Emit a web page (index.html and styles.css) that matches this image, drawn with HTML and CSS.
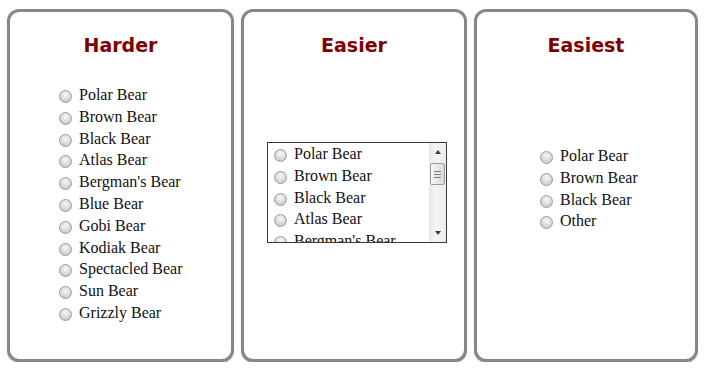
FILE: index.html
```html
<!DOCTYPE html>
<html>
<head>
<meta charset="utf-8">
<title>Bears</title>
<link rel="stylesheet" href="styles.css">
</head>
<body>
<div class="boards">
  <section class="panel panel--harder">
    <h2 class="title">Harder</h2>
    <ul class="bears bears--harder">
      <li><label><input type="radio" name="harder">Polar Bear</label></li>
      <li><label><input type="radio" name="harder">Brown Bear</label></li>
      <li><label><input type="radio" name="harder">Black Bear</label></li>
      <li><label><input type="radio" name="harder">Atlas Bear</label></li>
      <li><label><input type="radio" name="harder">Bergman's Bear</label></li>
      <li><label><input type="radio" name="harder">Blue Bear</label></li>
      <li><label><input type="radio" name="harder">Gobi Bear</label></li>
      <li><label><input type="radio" name="harder">Kodiak Bear</label></li>
      <li><label><input type="radio" name="harder">Spectacled Bear</label></li>
      <li><label><input type="radio" name="harder">Sun Bear</label></li>
      <li><label><input type="radio" name="harder">Grizzly Bear</label></li>
    </ul>
  </section>
  <section class="panel panel--easier">
    <h2 class="title">Easier</h2>
    <div class="listbox">
      <ul class="bears bears--box">
        <li><label><input type="radio" name="easier">Polar Bear</label></li>
        <li><label><input type="radio" name="easier">Brown Bear</label></li>
        <li><label><input type="radio" name="easier">Black Bear</label></li>
        <li><label><input type="radio" name="easier">Atlas Bear</label></li>
        <li><label><input type="radio" name="easier">Bergman's Bear</label></li>
      </ul>
      <div class="scrollbar">
        <span class="arrow arrow--up"></span>
        <span class="thumb"><i></i><i></i><i></i></span>
        <span class="arrow arrow--down"></span>
      </div>
    </div>
  </section>
  <section class="panel panel--easiest">
    <h2 class="title">Easiest</h2>
    <ul class="bears bears--easiest">
      <li><label><input type="radio" name="easiest">Polar Bear</label></li>
      <li><label><input type="radio" name="easiest">Brown Bear</label></li>
      <li><label><input type="radio" name="easiest">Black Bear</label></li>
      <li><label><input type="radio" name="easiest">Other</label></li>
    </ul>
  </section>
</div>
</body>
</html>
```
FILE: styles.css
```css
html, body {
  margin: 0;
  background: #ffffff;
}
body {
  font-family: "Liberation Serif", "Times New Roman", serif;
  color: #111111;
}
.boards {
  display: flex;
  gap: 7px;
  padding: 9px 0 0 7px;
}
.panel {
  box-sizing: border-box;
  flex: none;
  height: 353px;
  border: 3px solid #878787;
  border-radius: 12px;
  box-shadow: 0 1px 1px rgba(0, 0, 0, 0.25);
  background: #ffffff;
}
.panel--harder { width: 227px; }
.panel--easier { width: 226px; }
.panel--easiest { width: 224px; }

.title {
  margin: 22px 0 0;
  font-family: "DejaVu Sans", Verdana, sans-serif;
  font-weight: bold;
  font-size: 19px;
  line-height: 22px;
  color: #800000;
  text-align: center;
}

.bears {
  list-style: none;
  margin: 0;
  padding: 0;
  font-size: 16px;
  line-height: 21.8px;
}
.bears label {
  display: block;
  white-space: nowrap;
}
.bears input {
  -webkit-appearance: none;
  appearance: none;
  box-sizing: border-box;
  width: 13px;
  height: 13px;
  margin: 0 7px 0 0;
  vertical-align: -3px;
  border-radius: 50%;
  border: 1px solid #9c9c9c;
  background: radial-gradient(circle at 50% 35%, #f8f8f8 0%, #dedede 45%, #bdbdbd 100%);
}

.bears--harder {
  margin-top: 28px;
  padding-left: 49px;
}
.bears--easiest {
  margin-top: 89px;
  padding-left: 63px;
}

.listbox {
  box-sizing: border-box;
  display: flex;
  width: 180px;
  height: 101px;
  margin: 86px 0 0 23px;
  border: 1px solid #3a3a3a;
  background: #ffffff;
}
.bears--box {
  flex: 1;
  overflow: hidden;
  padding-left: 6px;
}
.scrollbar {
  flex: none;
  width: 17px;
  display: flex;
  flex-direction: column;
  align-items: center;
  padding: 7px 0;
  box-sizing: border-box;
  background: linear-gradient(to right, #e9e9e9, #f4f4f4 40%, #eeeeee);
}
.arrow {
  width: 0;
  height: 0;
  border-left: 3.5px solid transparent;
  border-right: 3.5px solid transparent;
}
.arrow--up {
  border-bottom: 4px solid #3d3d3d;
}
.arrow--down {
  margin-top: auto;
  border-top: 4px solid #3d3d3d;
}
.thumb {
  box-sizing: border-box;
  width: 15px;
  height: 22px;
  margin-top: 9px;
  border: 1px solid #9c9c9c;
  border-radius: 2px;
  background: linear-gradient(to right, #f7f7f7, #e6e6e6 60%, #d8d8d8);
  display: flex;
  flex-direction: column;
  align-items: center;
  justify-content: center;
  gap: 2px;
}
.thumb i {
  display: block;
  width: 7px;
  height: 1px;
  background: #7d7d7d;
}
```
